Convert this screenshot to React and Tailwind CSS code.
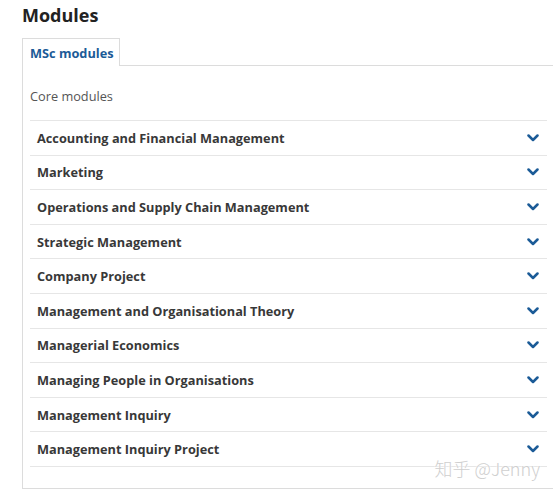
import React from 'react';

const modules = [
  'Accounting and Financial Management',
  'Marketing',
  'Operations and Supply Chain Management',
  'Strategic Management',
  'Company Project',
  'Management and Organisational Theory',
  'Managerial Economics',
  'Managing People in Organisations',
  'Management Inquiry',
  'Management Inquiry Project',
];

const Chevron = () => (
  <svg width="12" height="8" viewBox="0 0 12 8" className="shrink-0">
    <polyline
      points="1.5,1.5 6,6 10.5,1.5"
      fill="none"
      stroke="#1b5b97"
      strokeWidth="2.5"
      strokeLinecap="round"
      strokeLinejoin="round"
    />
  </svg>
);

export default function App() {
  return (
    <div
      className="relative w-[553px] h-[494px] overflow-hidden bg-white pl-[22px] pt-[3px]"
      style={{ fontFamily: '"Open Sans", "Liberation Sans", sans-serif' }}
    >
      <h1 className="text-[18px] leading-[24px] font-bold text-[#222]">Modules</h1>

      <div className="mt-[11px] flex">
        <div className="relative z-10 -mb-px w-[98px] h-[28px] border border-b-0 border-[#dcdcdc] bg-white flex items-center pl-[7px]">
          <span className="text-[12.75px] leading-[18px] font-bold text-[#1b5b97]">MSc modules</span>
        </div>
      </div>

      <div className="border-t border-l border-b border-[#dcdcdc] pl-[7px] pr-[6px] pb-[21px]">
        <p className="pt-[21px] pb-[15px] text-[12.75px] leading-[18px] text-[#555]">Core modules</p>
        <ul className="border-b border-[#e6e6e6]">
          {modules.map((m) => (
            <li
              key={m}
              className="h-[34.6px] border-t border-[#e6e6e6] flex items-center justify-between pl-[7px] pr-[8px]"
            >
              <span className="text-[12.75px] leading-[18px] font-bold text-[#383838]">{m}</span>
              <Chevron />
            </li>
          ))}
        </ul>
      </div>

      <div
        className="absolute right-[13px] top-[456px] text-[18px] leading-[24px] font-light text-[#cfcfcf]"
        style={{
          fontFamily: '"Noto Sans CJK SC", "DejaVu Sans", sans-serif',
          textShadow: '0 0 2px #fff, 0 0 2px #fff',
        }}
      >
        知乎 @Jenny
      </div>
    </div>
  );
}
